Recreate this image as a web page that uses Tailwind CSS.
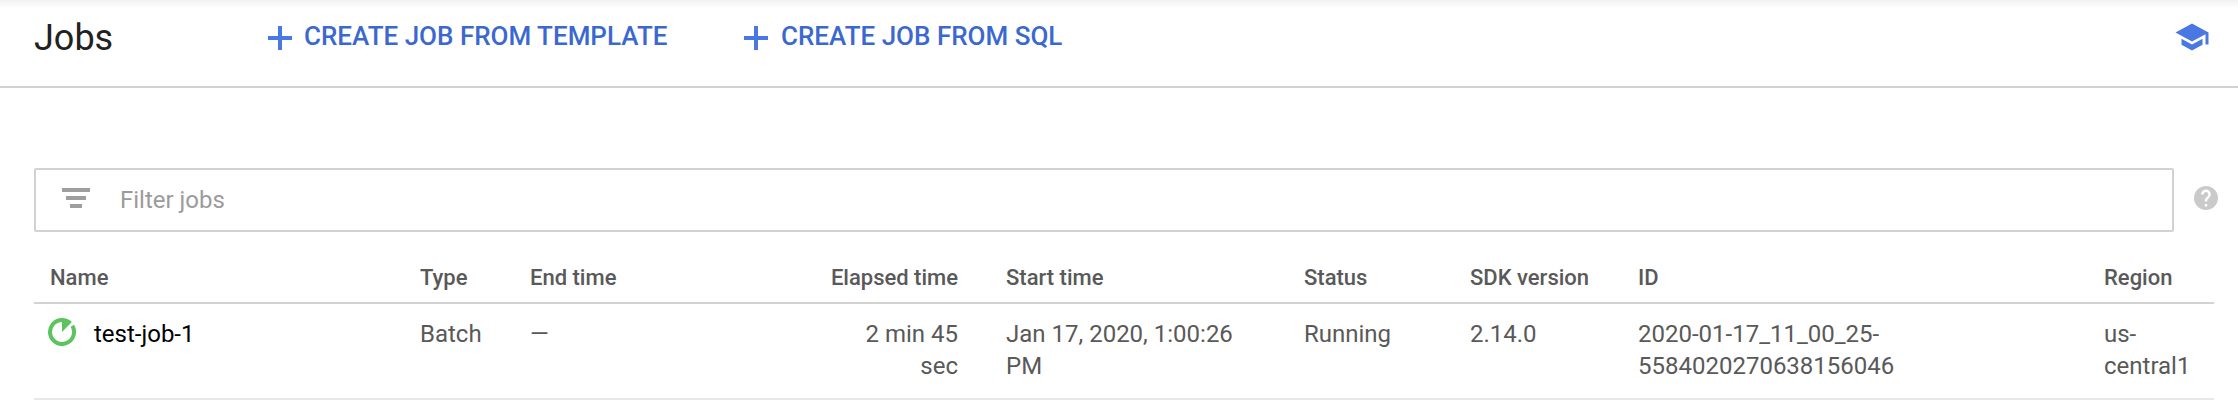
<!DOCTYPE html>
<html lang="en">
<head>
<meta charset="utf-8">
<title>Jobs</title>
<script src="https://cdn.jsdelivr.net/npm/@tailwindcss/browser@4"></script>
</head>
<body class="bg-white font-[Roboto,sans-serif] text-[#595959] h-[402px] overflow-hidden">
<header class="h-[88px] border-b-2 border-[#d2d2d2] flex items-start pl-[34px] pr-[28px] bg-[linear-gradient(to_bottom,#f1f1f1_0px,#ffffff_8px)]">
  <h1 class="w-[234px] pt-[17px] text-[36px] leading-[42px] text-[#212121]">Jobs</h1>
  <button class="w-[476px] flex items-start text-[#3b68d0]">
    <svg class="mt-[26px] mr-[12px] w-6 h-6 shrink-0" viewBox="0 0 24 24"><path fill="#4a78e2" d="M10 0h4v10h10v4H14v10h-4V14H0v-4h10z"/></svg>
    <span class="pt-[20px] text-[26px] leading-[32px] font-medium whitespace-nowrap">CREATE JOB FROM TEMPLATE</span>
  </button>
  <button class="flex items-start text-[#3b68d0]">
    <svg class="mt-[26px] mr-[13px] w-6 h-6 shrink-0" viewBox="0 0 24 24"><path fill="#4a78e2" d="M10 0h4v10h10v4H14v10h-4V14H0v-4h10z"/></svg>
    <span class="pt-[20px] text-[26px] leading-[32px] font-medium whitespace-nowrap">CREATE JOB FROM SQL</span>
  </button>
  <svg class="ml-auto mt-[19px] w-9 h-9" viewBox="0 0 24 24" fill="#4a78e2"><path d="M5 13.18v4L12 21l7-3.82v-4L12 17l-7-3.82zM12 3L1 9l11 6 9-4.91V17h2V9L12 3z"/></svg>
</header>
<main class="pt-[80px] pl-[34px]">
  <div class="flex">
    <div class="w-[2140px] h-[64px] border-2 border-[#d2d2d2] rounded-[2px] flex items-start pl-[26px]">
      <svg class="mt-[18px] w-7 h-5" viewBox="0 0 28 20" fill="#9e9e9e"><path d="M0 0h28v4H0zM4 8h20v4H4zM8 16h12v4H8z"/></svg>
      <span class="ml-[30px] pt-[14px] text-[24px] leading-[32px] text-[#9b9b9b]">Filter jobs</span>
    </div>
    <svg class="ml-5 mt-[18px] w-6 h-6" viewBox="2 2 20 20" fill="#cacaca"><path d="M12 2C6.48 2 2 6.48 2 12s4.48 10 10 10 10-4.48 10-10S17.52 2 12 2zm1 17h-2v-2h2v2zm2.07-7.75l-.9.92C13.45 12.9 13 13.5 13 15h-2v-.5c0-1.1.45-2.1 1.17-2.83l1.24-1.26c.37-.36.59-.86.59-1.41 0-1.1-.9-2-2-2s-2 .9-2 2H8c0-2.21 1.79-4 4-4s4 1.79 4 4c0 .88-.36 1.68-.93 2.25z"/></svg>
  </div>
  <table class="w-[2180px] table-fixed border-separate border-spacing-0 text-left">
    <colgroup><col class="w-[386px]"><col class="w-[110px]"><col class="w-[200px]"><col class="w-[262px]"><col class="w-[312px]"><col class="w-[166px]"><col class="w-[168px]"><col class="w-[466px]"><col class="w-[110px]"></colgroup>
    <thead>
      <tr class="h-[72px] align-top text-[22px] leading-[32px] [&>th]:font-medium [&>th]:pt-[30px] [&>th]:border-b-2 [&>th]:border-[#d2d2d2]">
        <th class="pl-[16px]">Name</th><th>Type</th><th>End time</th><th class="text-right pr-[34px]">Elapsed time</th><th class="pl-[14px]">Start time</th><th>Status</th><th>SDK version</th><th>ID</th><th>Region</th>
      </tr>
    </thead>
    <tbody>
      <tr class="h-[96px] align-top text-[24px] leading-[32px] [&>td]:pt-[14px] [&>td]:border-b-2 [&>td]:border-[#e8e8e8]">
        <td class="pl-[14px] text-black"><div class="flex"><svg class="w-7 h-7 mr-[18px]" viewBox="0 0 28 28"><path d="M24.3 7.8A12 12 0 1 1 14 2" fill="none" stroke="#5bc45f" stroke-width="4"/><path d="M14 0a14 14 0 0 1 9.9 4.1L14 14z" fill="#5bc45f"/></svg>test-job-1</div></td>
        <td>Batch</td><td>—</td><td class="text-right pr-[34px]">2 min 45<br>sec</td><td class="pl-[14px]">Jan 17, 2020, 1:00:26<br>PM</td><td>Running</td><td>2.14.0</td><td>2020-01-17_11_00_25-<br>5584020270638156046</td><td>us-<br>central1</td>
      </tr>
    </tbody>
  </table>
</main>
</body>
</html>
